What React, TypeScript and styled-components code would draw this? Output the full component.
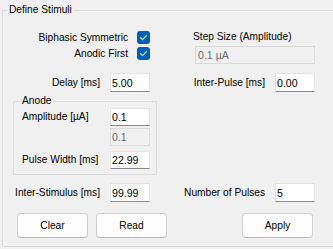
import React from 'react';
import styled, { createGlobalStyle } from 'styled-components';

/**
 * Global page styles.
 */

const GlobalStyle = createGlobalStyle`
  html, body {
    background: #f0f0f0;
    height: 249px;
    margin: 0;
    overflow: hidden;
    width: 333px;
  }

  body {
    color: #000;
    font-family: 'Liberation Sans', Arial, sans-serif;
    font-size: 10.2px;
  }
`;

/**
 * `GroupBox` styled component.
 */

const GroupBox = styled.fieldset<{ $width: number }>`
  border: 1px solid #dcdcdc;
  box-sizing: border-box;
  margin: 0;
  min-width: 0;
  padding: 0;
  width: ${({ $width }) => $width}px;
`;

/**
 * `OuterBox` styled component.
 */

const OuterBox = styled(GroupBox)`
  margin: 3px 0 0 2px;
`;

/**
 * `AnodeBox` styled component.
 */

const AnodeBox = styled(GroupBox)`
  margin-top: 2px;
`;

/**
 * `Legend` styled component.
 */

const Legend = styled.legend<{ $offset: number }>`
  line-height: 14px;
  margin-left: ${({ $offset }) => $offset}px;
  padding: 0 2px;
`;

/**
 * `Body` styled component.
 */

const Body = styled.div`
  display: flex;
  flex-direction: column;
  padding: 13px 0 8px 10px;
`;

/**
 * `TopRow` styled component.
 */

const TopRow = styled.div`
  align-items: flex-start;
  display: flex;
`;

/**
 * `CheckList` styled component.
 */

const CheckList = styled.div`
  align-items: center;
  column-gap: 9px;
  display: grid;
  grid-auto-rows: 13px;
  grid-template-columns: 115px 13px;
  margin-top: 1px;
  row-gap: 3px;
`;

/**
 * `Label` styled component.
 */

const Label = styled.span<{ $align?: 'left' | 'right' }>`
  line-height: 14px;
  text-align: ${({ $align }) => $align ?? 'left'};
  white-space: nowrap;
`;

/**
 * `CheckBox` styled component.
 */

const CheckBox = styled.span`
  align-items: center;
  background: #005fb8;
  border-radius: 3px;
  display: flex;
  height: 13px;
  justify-content: center;
  width: 13px;
`;

/**
 * `StepSize` styled component.
 */

const StepSize = styled.div`
  display: flex;
  flex-direction: column;
  gap: 2px;
  margin-left: 43px;
`;

/**
 * `TextBox` styled component.
 */

const TextBox = styled.input<{ $height?: number }>`
  background: #fff;
  border: 1px solid #e3e3e3;
  border-bottom-color: #8a8a8a;
  box-sizing: border-box;
  color: #000;
  font: inherit;
  font-size: 10.6px;
  height: ${({ $height }) => $height ?? 19}px;
  margin: 0;
  outline: none;
  padding: 0 1px;
  width: 100%;

  &:disabled {
    background: #f0f0f0;
    border-color: #dadada;
    color: #6d6d6d;
  }
`;

/**
 * `StepBox` styled component.
 */

const StepBox = styled(TextBox)`
  margin-left: 2px;
  padding: 0 2px;
  width: 120px;
`;

/**
 * `FieldRow` styled component.
 */

const FieldRow = styled.div<{ $gap: number }>`
  display: flex;
  margin-top: ${({ $gap }) => $gap}px;
`;

/**
 * `Field` styled component.
 */

const Field = styled.label<{ $width: number; $spacing?: number }>`
  align-items: center;
  column-gap: 10px;
  display: grid;
  grid-template-columns: minmax(0, 1fr) 40px;
  margin-right: ${({ $spacing }) => $spacing ?? 0}px;
  width: ${({ $width }) => $width}px;
`;

/**
 * `AnodeList` styled component.
 */

const AnodeList = styled.div`
  display: flex;
  flex-direction: column;
  padding: 0 6px 5px 8px;
`;

/**
 * `AnodeRow` styled component.
 */

const AnodeRow = styled.label<{ $gap: number }>`
  align-items: center;
  column-gap: 10px;
  display: grid;
  grid-template-columns: minmax(0, 1fr) 40px;
  margin-top: ${({ $gap }) => $gap}px;
`;

/**
 * `ButtonRow` styled component.
 */

const ButtonRow = styled.div`
  display: flex;
  justify-content: space-between;
  margin: 11px 0 0 4px;
  width: 296px;
`;

/**
 * `ButtonGroup` styled component.
 */

const ButtonGroup = styled.div`
  display: flex;
  gap: 8px;
`;

/**
 * `Button` styled component.
 */

const Button = styled.button`
  background: #fdfdfd;
  border: 1px solid #d0d0d0;
  border-bottom-color: #b8b8b8;
  border-radius: 4px;
  color: #000;
  font: inherit;
  height: 25px;
  padding: 0;
  width: 71px;
`;

/**
 * `Check` component.
 */

function Check() {
  return (
    <CheckBox>
      <svg width={13} height={13} viewBox={'0 0 13 13'}>
        <path
          d={'M3.4 6.7 L5.5 8.7 L9.6 4.5'}
          fill={'none'}
          stroke={'#fff'}
          strokeLinecap={'round'}
          strokeLinejoin={'round'}
          strokeWidth={1.1}
        />
      </svg>
    </CheckBox>
  );
}

/**
 * Export `App` component.
 */

export default function App() {
  return (
    <>
      <GlobalStyle />

      <OuterBox $width={340}>
        <Legend $offset={4}>{'Define Stimuli'}</Legend>

        <Body>
          <TopRow>
            <CheckList>
              <Label $align={'right'}>{'Biphasic Symmetric'}</Label>
              <Check />
              <Label $align={'right'}>{'Anodic First'}</Label>
              <Check />
            </CheckList>

            <StepSize>
              <Label>{'Step Size (Amplitude)'}</Label>
              <StepBox $height={18} defaultValue={'0.1 µA'} disabled />
            </StepSize>
          </TopRow>

          <FieldRow $gap={9}>
            <Field $spacing={32} $width={137}>
              <Label $align={'right'}>{'Delay [ms]'}</Label>
              <TextBox defaultValue={'5.00'} readOnly />
            </Field>

            <Field $width={133}>
              <Label $align={'right'}>{'Inter-Pulse [ms]'}</Label>
              <TextBox defaultValue={'0.00'} readOnly />
            </Field>
          </FieldRow>

          <AnodeBox $width={144}>
            <Legend $offset={6}>{'Anode'}</Legend>

            <AnodeList>
              <AnodeRow $gap={0}>
                <Label>{'Amplitude [µA]'}</Label>
                <TextBox $height={18} defaultValue={'0.1'} readOnly />
              </AnodeRow>

              <AnodeRow $gap={2}>
                <span />
                <TextBox $height={18} defaultValue={'0.1'} disabled />
              </AnodeRow>

              <AnodeRow $gap={5}>
                <Label>{'Pulse Width [ms]'}</Label>
                <TextBox $height={18} defaultValue={'22.99'} readOnly />
              </AnodeRow>
            </AnodeList>
          </AnodeBox>

          <FieldRow $gap={8}>
            <Field $spacing={32} $width={137}>
              <Label $align={'right'}>{'Inter-Stimulus [ms]'}</Label>
              <TextBox defaultValue={'99.99'} readOnly />
            </Field>

            <Field $width={133}>
              <Label $align={'right'}>{'Number of Pulses'}</Label>
              <TextBox defaultValue={'5'} readOnly />
            </Field>
          </FieldRow>

          <ButtonRow>
            <ButtonGroup>
              <Button>{'Clear'}</Button>
              <Button>{'Read'}</Button>
            </ButtonGroup>

            <Button>{'Apply'}</Button>
          </ButtonRow>
        </Body>
      </OuterBox>
    </>
  );
}
